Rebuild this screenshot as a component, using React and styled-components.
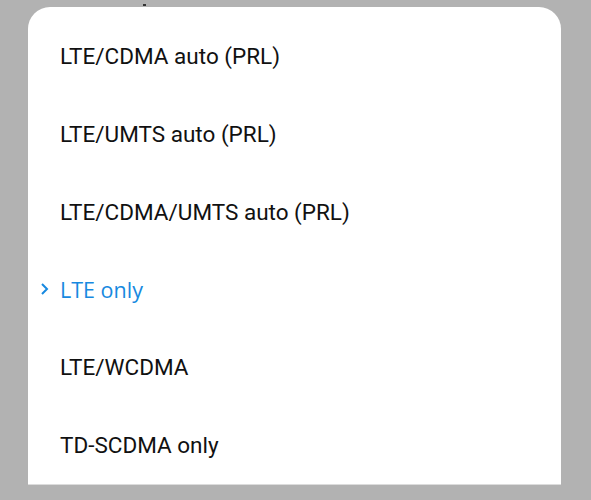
import React from 'react'
import styled, { createGlobalStyle } from 'styled-components'

const Global = createGlobalStyle`
  html, body {
    margin: 0;
    padding: 0;
    background: #b2b2b2;
  }
`

const Screen = styled.div`
  width: 591px;
  height: 500px;
  background: #b2b2b2;
  padding: 7px 30px 0 28px;
  box-sizing: border-box;
  position: relative;
  overflow: hidden;
`

const Speck = styled.div`
  position: absolute;
  left: 143px;
  top: 4px;
  width: 3px;
  height: 2px;
  background: #333;
`

const Sheet = styled.div`
  background: #fff;
  border-radius: 22px 22px 0 0;
  height: 478px;
  padding-top: 10px;
  box-sizing: border-box;
  border-bottom: 1px solid #dcdcdc;
  display: flex;
  flex-direction: column;
`

const Option = styled.div`
  height: 78px;
  display: flex;
  align-items: center;
  position: relative;
  padding-left: 32px;
  font-family: ${p => (p.$active ? '"Open Sans", "Noto Sans", sans-serif' : 'Roboto, "Noto Sans", sans-serif')};
  font-size: ${p => (p.$active ? '21.5px' : '22.5px')};
  color: ${p => (p.$active ? '#1789e0' : '#111')};
`

const Chevron = styled.svg`
  position: absolute;
  left: 12px;
  top: 50%;
  margin-top: -7px;
  width: 9px;
  height: 14px;
`

const options = [
  'LTE/CDMA auto (PRL)',
  'LTE/UMTS auto (PRL)',
  'LTE/CDMA/UMTS auto (PRL)',
  'LTE only',
  'LTE/WCDMA',
  'TD-SCDMA only',
]

export default function App() {
  const selected = 3
  return (
    <>
      <Global />
      <Screen>
        <Speck />
        <Sheet>
          {options.map((name, idx) => (
            <Option key={name} $active={idx === selected}>
              {idx === selected && (
                <Chevron viewBox="0 0 9 14">
                  <path d="M2 2 L7 7 L2 12" fill="none" stroke="#1789e0" strokeWidth="2" />
                </Chevron>
              )}
              {name}
            </Option>
          ))}
        </Sheet>
      </Screen>
    </>
  )
}
